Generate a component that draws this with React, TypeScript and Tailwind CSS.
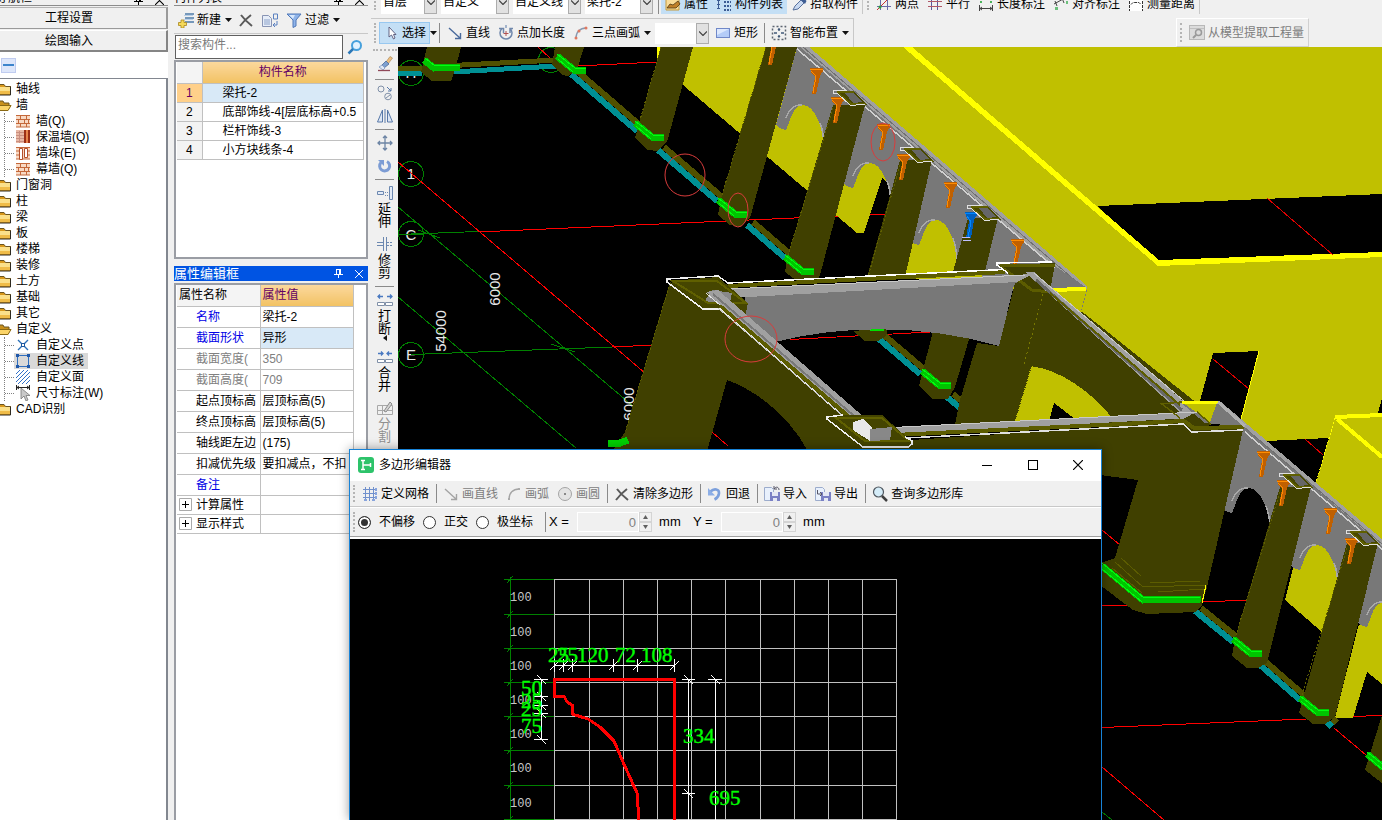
import React from "react";

const FONT = "font-['Liberation_Sans','Noto_Sans_CJK_SC',sans-serif]";

/* ---------- small icons, all on a 16 x 16 grid ---------- */

function Svg({ children, className = "" }: { children: React.ReactNode; className?: string }) {
  return (
    <svg viewBox="0 0 16 16" width="16" height="16" fill="none" className={"shrink-0 " + className} aria-hidden="true">
      {children}
    </svg>
  );
}

const Icons = {
  folder: (
    <Svg>
      <path d="M0 3.500h8l1.500 2H15V14H0z" fill="#d8981c" />
      <path d="M0 3.500h8l1.500 2H15" stroke="#6b5520" />
      <path d="M0 6h14v4H0z" fill="#fbe08a" />
      <path d="M0 10h14v3H0z" fill="#f0bc48" />
      <path d="M0 14h14.500V6" stroke="#2e2a20" />
    </Svg>
  ),
  folderOpen: (
    <Svg>
      <path d="M0 4h7l1 2h5v7H0z" fill="#c8901c" />
      <path d="M0 4h7l1 2h5v2" stroke="#6b5520" />
      <path d="M2 8h13.500l-3.500 6H0z" fill="#fbd468" />
      <path d="M2 8.500h13l-3 5H0" stroke="#8a6914" />
    </Svg>
  ),
  brick: (
    <Svg>
      <path d="M1 2h14v12H1z" fill="#f8d9c4" />
      <path d="M1 2.500h14M1 6.500h14M1 10.500h14M1 14h14M5.500 2v4M11.500 2v4M3.500 7v3M9.500 7v3M13.500 7v3M5.500 11v3M11.500 11v3" stroke="#c4683a" />
    </Svg>
  ),
  insul: (
    <Svg>
      <path d="M1 1h14v13H1z" fill="#e9b8a4" />
      <path d="M1 3.500h8M1 6.500h8M1 9.500h8M1 12.500h8M4.500 2v12" stroke="#c98f80" />
      <path d="M9 1h2v13H9zM13 1h2v13h-2z" fill="#9c2f16" />
      <path d="M11 1h2v13h-2z" fill="#e8844c" />
    </Svg>
  ),
  pier: (
    <Svg>
      <path d="M1 2h14v12H1z" fill="#f8d9c4" />
      <path d="M1 2.500h14M1 6h3M1 10h3M12 6h3M12 10h3M1 14h14" stroke="#c4683a" />
      <path d="M4.500 3.500h3v11h-3zM9.500 3.500h3v9h-3z" fill="#fff" stroke="#b4502a" />
    </Svg>
  ),
  point: (
    <Svg>
      <path d="M3 3l10 10M13 3L3 13" stroke="#2a70b8" strokeWidth="1.400" />
      <rect x="6.500" y="6.500" width="3" height="3" fill="#fff" stroke="#1c58a0" />
    </Svg>
  ),
  frame: (
    <Svg>
      <path d="M2.500 2.500h11v11h-11z" stroke="#2f6fc0" />
      <path d="M1 1h3v3H1zM12 1h3v3h-3zM1 12h3v3H1zM12 12h3v3h-3z" fill="#2058a8" />
    </Svg>
  ),
  hatch: (
    <Svg>
      <path d="M1 5l4-4M1 9l8-8M1 13l12-12M3 15L15 3M7 15l8-8M11 15l4-4" stroke="#3070c8" />
    </Svg>
  ),
  dimCursor: (
    <Svg>
      <path d="M1.500 0v5M14.500 0v5M2 2.500h12M4 1L2 2.500 4 4M12 1l2 1.500L12 4" stroke="#222" />
      <path d="M6 3v11l3-3 2 5 2-1-2-4.500h4z" fill="#c9c9c9" stroke="#777" strokeWidth=".8" />
    </Svg>
  ),
  create: (
    <Svg>
      <path d="M7 2h9M7 6h9M7 10h9" stroke="#4d7ba8" strokeWidth="1.500" />
      <path d="M6 3.500h9M6 7.500h9" stroke="#b8d0e8" />
      <path d="M3 8h3v2.500h2.500v3H6V16H3v-2.500H.5v-3H3z" fill="#f5d95a" stroke="#a8861c" strokeWidth=".8" />
    </Svg>
  ),
  cross: (
    <Svg>
      <path d="M3 3c3 4 6 7 11 11M13 3C9 6 5 10 2 14" stroke="#5a5a5a" strokeWidth="2" />
    </Svg>
  ),
  copyPage: (
    <Svg>
      <path d="M.5 3.500h6l3 3v8h-9z" fill="#e6edf8" stroke="#8894b4" />
      <path d="M2 8h6M2 10h6M2 12h6" stroke="#8aa0c8" />
      <path d="M11.500 2v5h4V2zM15 9v4h-4m2-2l-2 2 2 2" stroke="#5a80c0" />
    </Svg>
  ),
  filter: (
    <Svg>
      <path d="M1 2h14l-5 6v6l-3 1.500V8z" fill="#8fb4ea" stroke="#5078b8" />
      <path d="M3 3h6L7 7z" fill="#d8e8fc" />
    </Svg>
  ),
  search: (
    <Svg>
      <circle cx="9.500" cy="6.500" r="4.500" fill="#e2f2ff" stroke="#46a0dc" strokeWidth="2" />
      <path d="M6 10l-4.500 4.500" stroke="#2c78b8" strokeWidth="2.500" />
    </Svg>
  ),
  cursor: (
    <Svg>
      <path d="M6 2v10l2.500-2 2 4 1.500-1-1.500-3.500H13z" fill="#fff" stroke="#557" strokeWidth=".9" />
    </Svg>
  ),
  line: (
    <Svg>
      <path d="M2 3l11 10M13.500 8v5.500H8" stroke="#4a6a9c" strokeWidth="1.400" />
    </Svg>
  ),
  lineGray: (
    <Svg>
      <path d="M2 3l11 10M13.500 8v5.500H8" stroke="#a4a4a4" strokeWidth="1.400" />
    </Svg>
  ),
  pointLen: (
    <Svg>
      <path d="M4 3.500a6 6 0 1 0 8 0M1 3.500h4.500V8M12 8V3.500h3" stroke="#7088ac" strokeWidth="1.500" />
      <path d="M8 6v5M5.500 8.500h5" stroke="#b05050" />
      <path d="M8 0v3" stroke="#5878a8" />
    </Svg>
  ),
  arc3: (
    <Svg>
      <path d="M3 13C3 7 7 3 13 3" stroke="#8899b0" strokeWidth="1.300" />
      <circle cx="3" cy="13" r="1.500" fill="#e07860" />
      <circle cx="6" cy="6" r="1.500" fill="#e07860" />
      <circle cx="13" cy="3" r="1.500" fill="#e07860" />
    </Svg>
  ),
  arcGray: (
    <Svg>
      <path d="M3 13C3 7 7 3 13 3" stroke="#a4a4a4" strokeWidth="1.300" />
      <path d="M2 12h2v2H2zM12 2h2v2h-2z" fill="#aaa" />
    </Svg>
  ),
  circleGray: (
    <Svg>
      <circle cx="8" cy="8" r="6.500" fill="#e4e4e4" stroke="#a4a4a4" />
      <path d="M7 7h2v2H7z" fill="#888" />
    </Svg>
  ),
  rect: (
    <Svg>
      <rect x="1.500" y="3.500" width="13" height="9" fill="#b4ccf8" stroke="#7088c8" />
      <path d="M2 4h12L2 10z" fill="#dce8fe" />
    </Svg>
  ),
  smart: (
    <Svg>
      <rect x="1.500" y="1.500" width="13" height="13" stroke="#5c6470" strokeDasharray="2 2" strokeWidth="1.500" />
      <path d="M8 3v3M8 10v3M3 8h3M10 8h3M7 5l1-1 1 1M7 11l1 1 1-1" stroke="#405878" strokeWidth="1.300" />
    </Svg>
  ),
  extract: (
    <Svg>
      <rect x=".5" y=".5" width="15" height="14" fill="#dcdcdc" stroke="#b8b8b8" />
      <path d="M1 3.500h14" stroke="#c0c0c0" />
      <circle cx="9.500" cy="7.500" r="3" stroke="#9a9a9a" strokeWidth="1.500" />
      <path d="M7 10l-3 3" stroke="#9a9a9a" strokeWidth="2" />
    </Svg>
  ),
  property: (
    <Svg>
      <path d="M1 2h13v12H1z" fill="#f8dc98" stroke="#c49a3c" />
      <path d="M2 12l3-4 3 1 5-4 2 3-4 4H5z" fill="#c08028" stroke="#503810" strokeWidth=".8" />
    </Svg>
  ),
  list: (
    <Svg>
      <path d="M2.500 1v12M1 4.500h3M1 8.500h3M1 12.500h3" stroke="#3c5c94" />
      <path d="M8 2h7M8 6h7M8 10h7M8 14h7" stroke="#3c5c94" strokeWidth="2" strokeDasharray="2 1" />
    </Svg>
  ),
  picker: (
    <Svg>
      <path d="M2 14l2-4 6-6 3 3-6 6z" fill="#c8d8f0" stroke="#58709c" />
      <path d="M9 3l5 5 1.500-3-3-3.500z" fill="#3c5c94" />
    </Svg>
  ),
  twoPoint: (
    <Svg>
      <path d="M1 10.500h14M11.500 2v12M4.500 2v12" stroke="#6a6aa8" />
      <path d="M1 14L12 3" stroke="#c83030" />
      <circle cx="4" cy="11" r="1.500" fill="#2c9c3c" />
    </Svg>
  ),
  parallel: (
    <Svg>
      <path d="M4.500 2v12M10.500 2v12" stroke="#5858a0" />
      <path d="M1 5.500h14M1 10.500h14" stroke="#b05868" />
    </Svg>
  ),
  lengthDim: (
    <Svg>
      <path d="M2 5h2v2H2zM12 5h2v2h-2z" fill="#4cb45c" />
      <path d="M1.500 9v6M14.500 9v6M2 12.500h12M4 11l-2 1.500L4 14M12 11l2 1.500-2 1.500" stroke="#444" />
    </Svg>
  ),
  alignDim: (
    <Svg>
      <path d="M2 11h3v3H2zM13 5h2v3h-2z" fill="#6cc07c" />
      <path d="M1 8l11-6M2 5l2 5M9 2l2 5" stroke="#444" />
    </Svg>
  ),
  measure: (
    <Svg>
      <path d="M1 4h14v11H1z" fill="#fff" />
      <path d="M1.500 5v10M14.500 5v10M3 8.500l2-2h6l2 2" stroke="#333" strokeDasharray="3 1" />
    </Svg>
  ),
  eraser: (
    <Svg>
      <path d="M9 6l4-5.500L15.500 2 11 8z" fill="#f0c080" stroke="#a08050" strokeWidth=".6" />
      <path d="M5 9l4-4 3 3-5 4z" fill="#7ea0d0" stroke="#4a6898" strokeWidth=".8" />
      <path d="M2 11l3-2 3 3-2 2z" fill="#e0e8f4" stroke="#8098c0" strokeWidth=".8" />
      <path d="M1 14.500h12" stroke="#904858" strokeWidth="1.300" />
    </Svg>
  ),
  copyObj: (
    <Svg>
      <circle cx="4" cy="4" r="3" stroke="#8090a8" />
      <circle cx="11" cy="11.500" r="3.300" stroke="#8090a8" />
      <path d="M9 13l4-3" stroke="#8090a8" />
      <path d="M10 2l4 4m0-3v3h-3" stroke="#5878a8" />
    </Svg>
  ),
  mirror: (
    <Svg>
      <path d="M5.500 2v12h-5zM10.500 2v12h5z" stroke="#5878a8" fill="#dce6f4" />
      <path d="M8 1v14" stroke="#5878a8" />
    </Svg>
  ),
  move: (
    <Svg>
      <path d="M8 1v14M1 8h14M6 3l2-2 2 2M6 13l2 2 2-2M3 6L1 8l2 2M13 6l2 2-2 2" stroke="#6c84a4" strokeWidth="1.300" />
    </Svg>
  ),
  rotate: (
    <Svg>
      <path d="M10 3.500A5 5 0 1 1 4 4.500" stroke="#7c9cd4" strokeWidth="3" />
      <path d="M1 2h6v6z" fill="#7c9cd4" />
    </Svg>
  ),
  extend: (
    <Svg>
      <path d="M12.500 1.500h3v13h-3zM.5 6.500h6v3h-6z" stroke="#6c88b0" fill="#e2eaf6" />
      <path d="M8 7.500h4M8 10.500h4" stroke="#6c88b0" strokeDasharray="1 1" />
    </Svg>
  ),
  trim: (
    <Svg>
      <path d="M6.500 1v14M9.500 1v14M0 6.500h6M0 9.500h6" stroke="#6c88b0" />
      <path d="M10 6.500h6M10 9.500h6" stroke="#6c88b0" strokeDasharray="2 1" />
    </Svg>
  ),
  breakObj: (
    <Svg>
      <path d="M1 4.500h5M3 2.500l-2 2 2 2M10 4.500h5M13 2.500l2 2-2 2" stroke="#4878c0" strokeWidth="1.300" />
      <path d="M.5 10.500h7v3h-7zM8.500 10.500h7v3h-7z" stroke="#8090a8" fill="#fff" />
    </Svg>
  ),
  merge: (
    <Svg>
      <path d="M1 4.500h5M4 2.500l2 2-2 2M10 4.500h5M12 2.500l-2 2 2 2" stroke="#4878c0" strokeWidth="1.300" />
      <path d="M.5 10.500h7v3h-7zM8.500 10.500h7v3h-7z" stroke="#8090a8" fill="#fff" />
    </Svg>
  ),
  split: (
    <Svg>
      <path d="M.5 5.500h15v9H.5zM5.500 6v9M1 10.500h14" stroke="#a8a8a8" />
      <path d="M7 11l6-9 2 2-6 8z" fill="#d4d4d4" stroke="#8c8c8c" />
    </Svg>
  ),
  grid: (
    <Svg>
      <path d="M3.500 1v14M7.500 1v14M11.500 1v14M1 3.500h14M1 7.500h14M1 11.500h14" stroke="#7090cc" />
      <path d="M13 2h2v3h-2zM13 6h2v3h-2zM13 10h2v3h-2zM2 13h3v2H2zM10 13h3v2h-3z" fill="#88a4dc" />
    </Svg>
  ),
  undo: (
    <Svg>
      <path d="M3.500 5.500C7 2 12.500 3 12 7.500c-.4 3-2.500 5-4.500 6" stroke="#7ca0dc" strokeWidth="2.600" />
      <path d="M1 2v7.500h7z" fill="#8caee6" />
    </Svg>
  ),
  importFile: (
    <Svg>
      <path d="M.5 1.500h7l2 2v11h-9z" fill="#e8f0fc" stroke="#9caccc" />
      <path d="M6 6h10v9H6z" fill="#7a80c4" />
      <path d="M8 6h6v4H8zM9 12h4v3H9z" fill="#e4e8f4" />
      <path d="M10 3c2-3 5-2 5 1M10 0v3h3" stroke="#556" />
    </Svg>
  ),
  exportFile: (
    <Svg>
      <path d="M.5 1.500h7l2 2v11h-9z" fill="#e8f0fc" stroke="#9caccc" />
      <path d="M6 6h10v9H6z" fill="#7a80c4" />
      <path d="M8 6h6v4H8zM9 12h4v3H9z" fill="#e4e8f4" />
      <path d="M2.500 4v4h4M5 6l2 2-2 2" stroke="#556" />
    </Svg>
  ),
  magnifier: (
    <Svg>
      <circle cx="6.500" cy="6" r="5" fill="#d4ecf8" stroke="#505860" strokeWidth="1.200" />
      <path d="M10 10l5 5" stroke="#404040" strokeWidth="2.500" />
    </Svg>
  ),
};

function Caret({ className = "" }: { className?: string }) {
  return (
    <svg viewBox="0 0 7 4" width="7" height="4" className={"shrink-0 " + className} aria-hidden="true">
      <path d="M0 0h7L3.500 4z" fill="#111" />
    </svg>
  );
}

function Pin() {
  return (
    <svg viewBox="0 0 9 9" width="9" height="9" fill="none" stroke="currentColor" aria-hidden="true">
      <path d="M2.500 0v5M6.500 0v5M2 .5h5M5.500 0v5M0 5.500h9M4.500 6v3" />
    </svg>
  );
}

function Close({ size = 9 }: { size?: number }) {
  return (
    <svg viewBox="0 0 10 10" width={size} height={size} fill="none" stroke="currentColor" aria-hidden="true">
      <path d="M0 0l10 10M10 0L0 10" strokeWidth="1.200" />
    </svg>
  );
}

/* ---------- toolbar parts ---------- */

function Grip() {
  return <span className="mx-[3px] my-1 w-[2px] shrink-0 self-stretch border-l-2 border-dotted border-[#b4b4b4]" />;
}

function Sep({ className = "" }: { className?: string }) {
  return <span className={"w-px shrink-0 bg-[#8a8a8a] " + className} />;
}

type ToolProps = { icon: React.ReactNode; label: string; caret?: boolean; disabled?: boolean; className?: string };

function Tool({ icon, label, caret, disabled, className = "" }: ToolProps) {
  return (
    <button
      type="button"
      disabled={disabled}
      className={"flex shrink-0 items-center gap-[3px] px-1 whitespace-nowrap text-black disabled:text-[#7d7d7d] " + className}
    >
      {icon}
      {label}
      {caret && <Caret className="ml-[1px]" />}
    </button>
  );
}

function Combo({ label, value, className }: { label: string; value: string; className: string }) {
  return (
    <span className={"relative flex shrink-0 bg-white " + className}>
      <select aria-label={label} className="h-full w-full appearance-none bg-transparent pr-3 pl-[2px] outline-none">
        <option>{value}</option>
      </select>
      <span className="pointer-events-none absolute inset-y-0 right-0 flex w-[13px] items-center justify-center border border-[#adadad] bg-[#e1e1e1]">
        <svg viewBox="0 0 8 5" width="8" height="5" fill="none" aria-hidden="true">
          <path d="M0 .5l4 4 4-4" stroke="#404040" strokeWidth="1.200" />
        </svg>
      </span>
    </span>
  );
}

function TopToolbars() {
  return (
    <header className="h-[47px] shrink-0 text-xs">
      <div className="flex h-[18px] items-end overflow-hidden pb-1">
        <div className="flex h-6 shrink-0 items-end border-r border-[#c8c8c8]">
          <Grip />
          <div className="flex h-6 gap-1 pl-[2px]">
            <Combo label="楼层" value="首层" className="w-14" />
            <Combo label="构件类型" value="自定义" className="w-[68px]" />
            <Combo label="构件子类" value="自定义线" className="w-[68px]" />
            <Combo label="构件" value="梁托-2" className="w-[68px]" />
          </div>
          <Sep className="mr-[2px] ml-[5px] h-6" />
          <Tool icon={Icons.property} label="属性" className="h-5 bg-[#c4dff5]" />
          <Tool icon={Icons.list} label="构件列表" className="h-5 bg-[#c4dff5]" />
          <Tool icon={Icons.picker} label="拾取构件" className="h-5" />
        </div>
        <div className="flex h-6 shrink-0 items-end border-r border-[#c8c8c8] pl-px">
          <Grip />
          <Tool icon={Icons.twoPoint} label="两点" className="h-5" />
          <Tool icon={Icons.parallel} label="平行" className="h-5" />
          <Tool icon={Icons.lengthDim} label="长度标注" className="h-5" />
          <Tool icon={Icons.alignDim} label="对齐标注" className="h-5" />
          <Tool icon={Icons.measure} label="测量距离" className="h-5" />
        </div>
      </div>
      <div className="flex h-[29px] pr-[73px]">
        <div className="flex items-center border-t border-r border-[#c8c8c8]">
          <Grip />
          <button type="button" className="flex h-[22px] items-center gap-[3px] border border-[#98c8f0] bg-[#c4dff5] px-[3px] whitespace-nowrap">
            {Icons.cursor}选择
          </button>
          <Caret />
          <Sep className="mr-[3px] ml-[2px] h-5" />
          <Tool icon={Icons.line} label="直线" />
          <Tool icon={Icons.pointLen} label="点加长度" />
          <Tool icon={Icons.arc3} label="三点画弧" caret />
          <Combo label="半径" value="" className="h-[21px] w-[54px]" />
          <Tool icon={Icons.rect} label="矩形" className="ml-[2px]" />
          <Sep className="mx-[2px] h-5" />
          <Tool icon={Icons.smart} label="智能布置" caret />
        </div>
        <div className="ml-auto flex items-center border border-[#d0d0d0] border-t-white border-l-white">
          <Grip />
          <Tool icon={Icons.extract} label="从模型提取工程量" disabled />
        </div>
      </div>
    </header>
  );
}

const sideTools: ({ icon: React.ReactNode; text?: string; name: string; h: string; caret?: boolean; off?: boolean } | null)[] = [
  { icon: Icons.eraser, name: "删除", h: "h-6" },
  null,
  { icon: Icons.copyObj, name: "复制", h: "h-[23px]" },
  { icon: Icons.mirror, name: "镜像", h: "h-[22px]" },
  null,
  { icon: Icons.move, name: "移动", h: "h-[23px]" },
  { icon: Icons.rotate, name: "旋转", h: "h-[22px]" },
  null,
  { icon: Icons.extend, name: "延伸", text: "延伸", h: "h-[51px]" },
  { icon: Icons.trim, name: "修剪", text: "修剪", h: "h-[51px]" },
  null,
  { icon: Icons.breakObj, name: "打断", text: "打断", h: "h-[57px]", caret: true },
  { icon: Icons.merge, name: "合并", text: "合并", h: "h-[51px]" },
  { icon: Icons.split, name: "分割", text: "分割", h: "h-[51px]", off: true },
];

function SideToolbar() {
  return (
    <div className="flex w-[27px] shrink-0 flex-col items-center text-[13px] leading-[13px]">
      <span className="my-[2px] h-[2px] w-6 shrink-0 border-t-2 border-dotted border-[#b4b4b4]" />
      {sideTools.map((t, i) =>
        t === null ? (
          <span key={i} className="my-[2px] h-px w-[19px] shrink-0 bg-[#8a8a8a]" />
        ) : (
          <button
            key={i}
            type="button"
            aria-label={t.name}
            disabled={t.off}
            className={"flex w-5 shrink-0 flex-col items-center pt-[3px] disabled:text-[#909090] " + t.h}
          >
            {t.icon}
            {t.text && <span className="w-[13px] pt-px break-all">{t.text}</span>}
            {t.caret && (
              <svg viewBox="0 0 4 6" width="4" height="6" className="shrink-0" aria-hidden="true">
                <path d="M4 0v6L0 3z" fill="#111" />
              </svg>
            )}
          </button>
        ),
      )}
    </div>
  );
}

/* ---------- navigation tree ---------- */

type Node = { label: string; children?: { label: string; icon: React.ReactNode; selected?: boolean }[] };

const tree: Node[] = [
  { label: "轴线" },
  {
    label: "墙",
    children: [
      { label: "墙(Q)", icon: Icons.brick },
      { label: "保温墙(Q)", icon: Icons.insul },
      { label: "墙垛(E)", icon: Icons.pier },
      { label: "幕墙(Q)", icon: Icons.brick },
    ],
  },
  { label: "门窗洞" },
  { label: "柱" },
  { label: "梁" },
  { label: "板" },
  { label: "楼梯" },
  { label: "装修" },
  { label: "土方" },
  { label: "基础" },
  { label: "其它" },
  {
    label: "自定义",
    children: [
      { label: "自定义点", icon: Icons.point },
      { label: "自定义线", icon: Icons.frame, selected: true },
      { label: "自定义面", icon: Icons.hatch },
      { label: "尺寸标注(W)", icon: Icons.dimCursor },
    ],
  },
  { label: "CAD识别" },
];

function NavPanel() {
  return (
    <aside className="flex w-[168px] shrink-0 flex-col">
      <PanelTop title="导航栏" className="-ml-1" />
      <div className="flex flex-col gap-px pt-px">
        <button type="button" className="h-[22px] border-t border-r-2 border-b border-[#9a9a9a] border-t-[#b4b4b4] pr-7 text-xs">
          工程设置
        </button>
        <button type="button" className="h-[22px] border-t border-r-2 border-b-2 border-[#858585] border-t-white pr-7 text-xs">
          绘图输入
        </button>
      </div>
      <div className="flex h-[26px] items-center bg-white pl-px">
        <button type="button" aria-label="折叠" className="flex h-[15px] w-[15px] items-center border border-[#c0ccf0] bg-[#dde6fa] px-px">
          <span className="h-[2px] w-full bg-[#3c84cc]" />
        </button>
      </div>
      <ul className="flex-1 border-t border-r-2 border-[#828790] bg-white pt-[2px] text-xs leading-4">
        {tree.map((n) => (
          <li key={n.label}>
            <button type="button" className="flex h-4 items-center overflow-hidden">
              <span className="-ml-1 mr-1 flex">{n.children ? Icons.folderOpen : Icons.folder}</span>
              {n.label}
            </button>
            {n.children && (
              <ul className="ml-1 border-l border-dotted border-[#808080]">
                {n.children.map((c) => (
                  <li key={c.label} className="flex h-4 items-center">
                    <span className="w-[9px] border-t border-dotted border-[#808080]" />
                    <button type="button" className={"flex h-4 items-center gap-[5px] pr-1 " + (c.selected ? "bg-[#d9d9d9]" : "")}>
                      <span className="ml-px flex">{c.icon}</span>
                      {c.label}
                    </button>
                  </li>
                ))}
              </ul>
            )}
          </li>
        ))}
      </ul>
    </aside>
  );
}

function PanelTop({ title, className = "" }: { title: string; className?: string }) {
  return (
    <div className="flex h-[6px] shrink-0 items-end overflow-hidden border-b border-[#8c8c8c] text-xs leading-[14px]">
      <span className={className}>{title}</span>
      <span className="ml-auto flex items-end gap-3 pr-1">
        <Pin />
        <Close />
      </span>
    </div>
  );
}

/* ---------- component list and property panel ---------- */

const components = ["梁托-2", "底部饰线-4[层底标高+0.5", "栏杆饰线-3", "小方块线条-4"];

const props: { name: string; value: string; tone: string; on?: boolean }[] = [
  { name: "名称", value: "梁托-2", tone: "text-[#0000e6]" },
  { name: "截面形状", value: "异形", tone: "text-[#0000e6]", on: true },
  { name: "截面宽度(", value: "350", tone: "text-[#808080]" },
  { name: "截面高度(", value: "709", tone: "text-[#808080]" },
  { name: "起点顶标高", value: "层顶标高(5)", tone: "text-black" },
  { name: "终点顶标高", value: "层顶标高(5)", tone: "text-black" },
  { name: "轴线距左边", value: "(175)", tone: "text-black" },
  { name: "扣减优先级", value: "要扣减点，不扣", tone: "text-black" },
  { name: "备注", value: "", tone: "text-[#0000e6]" },
];

function MiddlePanel() {
  return (
    <section className="ml-[6px] flex w-[194px] shrink-0 flex-col text-xs">
      <PanelTop title="构件列表" />
      <div className="flex h-[27px] shrink-0 items-center">
        <Tool icon={Icons.create} label="新建" caret className="pr-[2px]" />
        <button type="button" aria-label="删除" className="ml-1">{Icons.cross}</button>
        <button type="button" aria-label="复制" className="ml-2">{Icons.copyPage}</button>
        <Tool icon={Icons.filter} label="过滤" caret className="ml-1" />
      </div>
      <div className="flex h-[27px] shrink-0 items-center border-t border-[#c8c8c8] pl-px">
        <input aria-label="搜索构件" placeholder="搜索构件..." className="h-6 w-[168px] border border-[#606060] bg-white px-[2px] pb-1 outline-none placeholder:text-[#7a7a7a]" />
        <button type="button" aria-label="搜索" className="ml-1">{Icons.search}</button>
      </div>
      <div className="h-[199px] shrink-0 border-2 border-[#9a9da4] bg-white pl-px">
        <table className="w-[187px] table-fixed border-collapse">
          <thead>
            <tr className="h-[21px]">
              <th className="w-[25px] border-r border-b border-[#c0c0c0] bg-[#f4f4f4]" />
              <th className="border-r border-b border-[#c0c0c0] bg-linear-to-b from-[#fbd89c] to-[#f2c262] p-0 font-normal text-[#640064]">构件名称</th>
            </tr>
          </thead>
          <tbody>
            {components.map((c, i) => (
              <tr key={c} className="h-[19px]">
                <td className={"border-r border-b border-[#c0c0c0] p-0 text-center leading-4 " + (i === 0 ? "bg-[#ffd08a] text-[#640064]" : "bg-[#f3f3f3]")}>{i + 1}</td>
                <td className={"overflow-hidden border-r border-b border-[#c0c0c0] p-0 pl-5 leading-4 whitespace-nowrap " + (i === 0 ? "bg-[#d8e9f7]" : "")}>{c}</td>
              </tr>
            ))}
          </tbody>
        </table>
      </div>
      <div className="mt-[7px] flex h-[15px] shrink-0 items-center bg-[#0054e3] pr-[5px] text-[13px] leading-[15px] text-white">
        <h2>属性编辑框</h2>
        <button type="button" aria-label="固定" className="ml-auto"><Pin /></button>
        <button type="button" aria-label="关闭" className="ml-3"><Close size={8} /></button>
      </div>
      <div className="mt-[2px] flex-1 border-t-2 border-r-2 border-l-2 border-[#9a9da4] bg-white pl-px">
        <table className="w-[177px] table-fixed border-collapse">
          <thead>
            <tr className="h-[21px] text-left">
              <th className="w-[83px] border-r border-b border-[#c0c0c0] bg-[#f4f4f4] p-0 pl-[2px] font-normal">属性名称</th>
              <th className="border-r border-b border-[#c0c0c0] bg-linear-to-b from-[#fbd89c] to-[#f2c262] p-0 pl-[2px] font-normal text-[#640064]">属性值</th>
            </tr>
          </thead>
          <tbody>
            {props.map((p) => (
              <tr key={p.name} className="h-[21px]">
                <td className={"overflow-hidden border-r border-b border-[#c0c0c0] p-0 pl-[19px] leading-4 whitespace-nowrap " + p.tone}>{p.name}</td>
                <td className={"overflow-hidden border-r border-b border-[#c0c0c0] p-0 pl-[2px] leading-4 whitespace-nowrap " + (p.on ? "bg-[#d8e9f7] " : "") + (p.tone === "text-[#808080]" ? "text-[#808080]" : "")}>{p.value}</td>
              </tr>
            ))}
            {["计算属性", "显示样式"].map((g) => (
              <tr key={g} className="h-[19px]">
                <td className="border-r border-b border-[#c0c0c0] p-0 pl-[2px] leading-4">
                  <button type="button" className="flex items-center gap-1">
                    <svg viewBox="0 0 13 13" width="13" height="13" fill="#fff" stroke="#aaa" aria-hidden="true">
                      <path d="M.5 .5h12v12H.5z" />
                      <path d="M3 6.500h7M6.500 3v7" stroke="#000" />
                    </svg>
                    {g}
                  </button>
                </td>
                <td className="border-r border-b border-[#c0c0c0]" />
              </tr>
            ))}
          </tbody>
        </table>
      </div>
    </section>
  );
}

/* ---------- 3D view ---------- */

const bays = [[776, 125], [843, 183], [909, 240], [976, 297], [1222, 508], [1290, 565], [1357, 622]];
const brackets = [[766, 39], [810, 68], [831, 97], [877, 124], [897, 154], [944, 182], [1011, 239], [1257, 451], [1277, 480], [1324, 508], [1345, 538]];
const clamps = [[557, 55], [635, 122], [718, 199], [785, 256], [922, 370], [1233, 638], [1300, 697], [1367, 753]];
const rails = [[571, 74, 637, 131], [658, 150, 717, 201], [747, 225, 785, 258], [879, 339, 920, 374], [947, 397, 960, 408], [1195, 611, 1233, 642], [1260, 665, 1300, 700], [1327, 722, 1332, 727]];
const caps = [[833, 90], [900, 147], [967, 205], [1279, 473], [1346, 530]];

function Capital({ x, y }: { x: number; y: number }) {
  return (
    <g transform={`translate(${x} ${y})`}>
      <path d="M3 2h18l14 13-18 1z" fill="#484800" />
      <path d="M12 3h8l10 9-10 1z" fill="#666" />
      <path d="M4 2h17M5 3l13 11h15" stroke="#606000" strokeWidth="2" />
      <path d="M14 0H0v3l5 1 12 11h6l9-1" stroke="#e0e0e0" />
    </g>
  );
}

function Scene() {
  return (
    <svg viewBox="398 47 984 773" preserveAspectRatio="xMinYMin slice" fill="none" shapeRendering="crispEdges" className="block h-full w-full" role="img" aria-label="三维视图">
      <rect x="398" y="47" width="984" height="773" fill="#000" />

      {/* axis grid */}
      <g stroke="#008000">
        <path d="M398 207L640 412M398 297L576 448M398 234.500L478 231.500M412 354.500L612 347M551 344l24 8M418 230l22 8M1102 812l10 8" />
        <circle cx="411" cy="73" r="12.500" />
        <circle cx="411" cy="174" r="12.500" />
        <circle cx="411" cy="234" r="12.500" />
        <circle cx="411" cy="355" r="12.500" />
        <circle cx="551" cy="60" r="12.500" />
      </g>
      <g fill="#e8e8e8" fontFamily="Liberation Sans, sans-serif" fontSize="15" textAnchor="middle">
        <text x="411" y="78">H</text>
        <text x="411" y="179">1</text>
        <text x="411" y="240">C</text>
        <text x="411" y="360">E</text>
        <text transform="translate(500 289) rotate(-90)">6000</text>
        <text transform="translate(446 331) rotate(-90)">54000</text>
        <text transform="translate(634 404) rotate(-90)">6000</text>
      </g>
      <path d="M398 162L645 373M712 432l16 14M478 232L885 214M612 347l42-2M790 339.500L930 332M577 66l80-4M538 47l12 11M1102 606l25-1M1202 602l46-2M1102 727.500L1306 719M1350 717l32-2M1102 530l18 15M1102 767l62 53M1334 728l32 27" stroke="#f00" />
      <path d="M411 354.500H418M400 234.500h24" stroke="#008000" />

      {/* rear yellow volumes */}
      <path d="M657 47H1382V438L1328 438 1267 441 1240 425 1200 418 1050 292 985 290 905 277 915 200 900 195 882 178 864 233H857L683 85 657 62z" fill="#c0c000" />
      <path d="M1097 206L1382 194V253L1159 262zM1213 353l46-2-19 72-40-22zM1378 413l4-15v15z" fill="#000" />
      <path d="M903 47h9L1159 260 1382 252v5L1158 266zM657 47h5l-5 14z" fill="#ff0" />
      <path d="M1259 351l-19 72" stroke="#ff0" />
      <path d="M1267 198l66 57M1213 359l36 30" stroke="#e00000" />
      <path d="M1267 441l61-3-12 45z" fill="#000" />
      <path d="M1305 439l18 16" stroke="#e00000" />
      <path d="M1335 417l47-3V545L1316 483z" fill="#c0c000" />
      <path d="M1335 417l47-2M1337 419l45 38" stroke="#ff0" strokeWidth="4" />
      <path d="M1335 418l-19 65" stroke="#ff0" strokeDasharray="2 2" />
      <path d="M1300 540h35l10 35-23 57-37-32zM1358 627l24-27v84l-15-12-14 46h-18z" fill="#c0c000" />

      {/* arcade walls */}
      {bays.map(([x, y]) => (
        <g key={x} transform={`translate(${x} ${y})`}>
          <path d="M0 0L21 -78 90 -20 60 30 48 24C47 0 38 -20 27 -20C18 -20 15 -8 12 0L10 5 3 3z" fill="#787878" />
          <path d="M10 -7C13 -16 19 -21 26 -20M44 -2C47 6 48 14 48 22" stroke="#a8a8a8" strokeWidth="1.500" />
        </g>
      ))}
      <path d="M797 47h8L1085 288v4L797 52zM1217 402L1382 541v12L1243 434z" fill="#787878" />
      <path d="M800 47h9L1087 286v4h-6zM1216 402h5L1382 539v7z" fill="#a0a0a0" />
      <path d="M797 49L1080 289M1245 432L1382 549" stroke="#d0d0d0" strokeWidth="1.500" />
      <path d="M803 47l282 242M1219 406L1382 544" stroke="#707070" />

      {/* rails between the piers */}
      {rails.map(([a, b, c, d]) => (
        <g key={a}>
          <path d={`M${a + 6} ${b - 3}L${c + 5} ${d - 4}`} stroke="#505000" strokeWidth="6" />
          <path d={`M${a} ${b}L${c} ${d}`} stroke="#009094" strokeWidth="6" />
        </g>
      ))}
      <path d="M398 68.500H422M453 65.500L556 60" stroke="#505000" strokeWidth="5" />
      <path d="M398 73.500H422M453 72L556 66" stroke="#009094" strokeWidth="5" />

      {/* piers */}
      <g fill="#404000">
        <path d="M427 47h34l-6 23-4 11H432L421 72zM555 47h29l-7 23-9 6-6-1-10-10z" />
        <path d="M661 47h32L667 142l-10 9-9-1-13-12 5-18z" />
        <path d="M766 47h31L750 218l-10 9-10-2-12-10 4-20z" />
        <path d="M833 105h32L820 275l-2 6H797L785 272l3-17z" />
        <path d="M900 160h32L905 277H867z" />
        <path d="M968 218h30L984 275H952z" />
        <path d="M853 331l35-3-2 8-8 5H865z" />
        <path d="M933 331l37 5-15 51-7 12H933l-14-13z" />
        <path d="M1280 487h31L1267 663l-9 5h-11l-15-12 3-18zM1347 543h31L1335 717l-10 7h-12l-14-11zM1382 715l-17 55 17 13z" />
      </g>
      <path d="M661 47L640 120M766 47L722 195M833 108L788 255M900 165L868 277M1280 492l-45 146M1347 548l-46 150" stroke="#606000" strokeDasharray="2 2" />
      <path d="M870 330l14-1" stroke="#00e000" strokeWidth="3" />

      {clamps.map(([x, y]) => (
        <g key={x} transform={`translate(${x} ${y})`}>
          <path d="M0 1L17 15 29 15" stroke="#00c400" strokeWidth="7" />
          <path d="M0 -1L18 13 29 13M1 4L16 17" stroke="#00ff10" />
        </g>
      ))}
      <path d="M424 60l10 8 26-1" stroke="#00c400" strokeWidth="7" />
      <path d="M425 58l10 8 25-1" stroke="#00ff10" />

      {/* brackets */}
      {brackets.map(([x, y]) => (
        <g key={x} transform={`translate(${x} ${y})`}>
          <path d="M0 0h13v3l-3 5-4 18H2L5 9 1 4z" fill="#c06000" />
          <path d="M0 1h13M1 3l5 5-3 17" stroke="#ff8c00" />
        </g>
      ))}
      <path d="M965 212h12v3l-3 5-3 18h-5l3-17-3-5z" fill="#0060c0" />
      <path d="M965 213h12M967 216l4 6-3 15" stroke="#0088ff" />
      <path d="M962 237h8M963 240h8" stroke="#c0c0ff" />
      {caps.map(([x, y]) => (
        <Capital key={x} x={x} y={y} />
      ))}

      {/* right side frame */}
      <path d="M1015 283L1040 276 1055 290 1218 420 1200 430 955 424 960 400 977 343 999 346z" fill="#404000" />
      <path d="M1031 366C1060 370 1090 390 1114 420L1014 424z" fill="#c0c000" />
      <path d="M1031 366l-17 56" stroke="#404000" strokeWidth="2" strokeDasharray="1 1" />
      <path d="M1054 403l-5 18 26-2z" fill="#000" />
      <path d="M1055 266l32 22-37 2z" fill="#787878" />
      <path d="M1050 292l37-3-5 22-2 5z" fill="#c0c000" />
      <path d="M1048 290.500l38-2" stroke="#ff0" strokeWidth="4" />
      <path d="M1087 290l-6 20" stroke="#787878" strokeDasharray="2 2" />
      <path d="M997 265l58-2-5 29-20-2z" fill="#404000" />
      <path d="M1043 294l-19 70" stroke="#787800" strokeDasharray="2 3" />
      <path d="M1000 265h55M1000 266l32 24 18 2" stroke="#5c5c00" strokeWidth="3" />

      {/* rear beam */}
      <path d="M745 297L1015 281 999 346C930 326 850 323 775 342L745 318z" fill="#787878" />
      <path d="M708 290L1033 274l-16 8L730 298z" fill="#a0a0a0" />
      <path d="M708 290L1025 275" stroke="#c8c8c8" />
      <path d="M728 286L1005 272" stroke="#5c5c00" strokeWidth="4" />
      <path d="M728 283L1003 269.500M1008 273l-11-8v-2l55-1" stroke="#fff" strokeWidth="1.500" />
      <path d="M1025 272h9l163 141-14 2z" fill="#a0a0a0" />
      <path d="M1036 280l146 130" stroke="#686868" strokeWidth="3" />
      <path d="M1034 273l163 139" stroke="#c8c8c8" />
      <path d="M1050 293l130 112" stroke="#5c5c00" strokeWidth="2" />

      {/* left arch frame */}
      <path d="M670 282L720 300 800 370 885 440 880 455H810C790 415 755 390 727 380L706 455H610L625 432z" fill="#404000" />
      <path d="M670 283l-45 150" stroke="#606000" strokeDasharray="2 2" />
      <path d="M608 443h12l8-3" stroke="#00d000" strokeWidth="7" />
      <path d="M670 281l48-4 30 26-3 15-23-10H704z" fill="#464600" />
      <path d="M712 290l20 3-2 10-26-1z" fill="#888" />
      <path d="M673 281h44l29 22h-38z" stroke="#606000" strokeWidth="2" />
      <path d="M706 292l12-2 154 134-16 1z" fill="#a0a0a0" />
      <path d="M706 293l150 130" stroke="#e0e0e0" />
      <path d="M713 294l148 128" stroke="#787878" strokeWidth="2" />
      <path d="M720 306l128 110" stroke="#5c5c00" strokeWidth="4" />
      <path d="M728 283l-10-7-51 3v3l36 27h17l123 107" stroke="#f0f0f0" strokeWidth="1.500" />
      <path d="M718 308l125 108" stroke="#c8c8c8" />

      {/* front frame */}
      <path d="M863 447L912 440 1182 422 1243 430 1207 587 1202 605 1195 612 1147 614 1133 610 1100 585V563L1115 558 1138 480 1100 475H875z" fill="#404000" />
      <path d="M1180 402h38l27 25-40-4z" fill="#787878" />
      <path d="M1183 403h34l-7 19z" fill="#c0c000" />
      <path d="M1182 402.500h36" stroke="#ff0" strokeWidth="3" />
      <path d="M892 427L1197 411.500l-13 7L892 434z" fill="#a0a0a0" />
      <path d="M892 427.500L1197 412" stroke="#c8c8c8" />
      <path d="M895 435L1184 421l10 7 50-1" stroke="#5c5c00" strokeWidth="4" />
      <path d="M906 438L1183 424l9 8 51-2" stroke="#e0e0e0" strokeWidth="1.500" />
      <path d="M1182 402l-20 2 18 14M1197 412l14 12M1220 403l25 22" stroke="#606000" strokeWidth="1.500" />
      <path d="M1218 402l27 24" stroke="#b0b0b0" strokeWidth="3" />
      <path d="M828 417l14-2h40l30 27-49 5z" fill="#444400" />
      <path d="M836 418h46l27 23h-44z" stroke="#606000" strokeWidth="2" />
      <path d="M843 415l-16 2v2l36 28h45l4-3v-3l-7-4" stroke="#f0f0f0" strokeWidth="1.500" />
      <path d="M853 422l10-3 9 9-2 13-17-11z" fill="#e8e8e8" />
      <path d="M870 429l22-2-2 13-20 1z" fill="#888" />
      <path d="M1115 562l28 25 62-2M1112 568l30 25M1150 583l50-2M1158 592l46-3M1121 558l20 18" stroke="#5c5c00" />
      <path d="M1102 566l41 34 58-1" stroke="#00c400" strokeWidth="7" />
      <path d="M1102 563l42 35 57-1M1102 569l40 33" stroke="#00ff10" />
      <path d="M1206 585l-4 18" stroke="#ff0" />

      {/* review marks */}
      <g stroke="#d83c3c" shapeRendering="auto">
        <ellipse cx="685" cy="175" rx="20" ry="21" />
        <ellipse cx="738" cy="210" rx="10" ry="17" />
        <ellipse cx="883" cy="142" rx="12" ry="19" />
        <ellipse cx="751" cy="339" rx="26" ry="23" />
      </g>
    </svg>
  );
}

/* ---------- polygon editor ---------- */

const gx = [554, 589, 623, 657, 691, 725, 760, 794, 828, 862, 896];
const gy = [579, 614, 648, 682, 716, 750, 785, 819];

function PolygonCanvas() {
  return (
    <svg viewBox="350 539 751 281" preserveAspectRatio="xMinYMin slice" fill="none" shapeRendering="crispEdges" className="block min-h-0 w-full flex-1 bg-black" role="img" aria-label="多边形">
      <g stroke="#c0c0c0">
        {gx.map((x) => <path key={x} d={`M${x}.5 579V820`} />)}
        {gy.map((y) => <path key={y} d={`M554 ${y}.5H896`} />)}
      </g>
      <g stroke="#008000">
        <path d="M510.500 577V820" />
        {gy.map((y) => <path key={y} d={`M504 ${y}.5H554M507 ${y + 4}l6 -7`} />)}
      </g>
      <g fill="#c8c8c8" fontFamily="Liberation Mono, monospace" fontSize="12">
        {gy.slice(0, 7).map((y) => <text key={y} x="510" y={y + 22}>100</text>)}
      </g>
      <g stroke="#fff">
        <path d="M554 665.500H675M541.500 679V740M688.500 679V820M715.500 679V820" />
        {[554, 563, 572, 613, 637, 674].map((x) => <path key={x} d={`M${x}.5 659v13M${x - 4} 670l9 -9`} />)}
        {[679, 696, 705, 713, 739].map((y) => <path key={y} d={`M534 ${y}.5h14M537 ${y - 4}l9 9`} />)}
        {[679, 793].map((y) => <path key={y} d={`M682 ${y}.5h13M684 ${y - 4}l9 9`} />)}
        <path d="M708 679.500h14M711 675l9 9" />
      </g>
      <path d="M639 820L637 793 623 762 614 741 600 727 588 719 572 714V705L567 702 564 696H554.500V679.500H674.500V820" stroke="#f00" strokeWidth="3" />
      <g fill="#00ff00" stroke="#00ff00" strokeWidth=".4" fontFamily="Liberation Serif, serif" fontSize="21">
        <text x="548" y="662">25</text>
        <text x="557" y="662">25</text>
        <text x="577" y="662">120</text>
        <text x="615" y="662">72</text>
        <text x="641" y="662">108</text>
        <text x="521" y="695">50</text>
        <text x="521" y="708">25</text>
        <text x="521" y="716">25</text>
        <text x="521" y="733">75</text>
        <text x="683" y="743">334</text>
        <text x="709" y="805">695</text>
      </g>
    </svg>
  );
}

function Coord({ axis }: { axis: string }) {
  const id = "coord-" + axis;
  return (
    <div className="flex items-center">
      <label htmlFor={id} className="w-7 text-[13px]">{axis} =</label>
      <input id={id} disabled defaultValue="0" className="h-5 w-[62px] border border-white bg-[#f0f0f0] pr-[2px] text-right text-[13px] text-[#808080]" />
      <span className="flex w-[13px] flex-col">
        {["M0 4h5L2.500 0z", "M0 0h5L2.500 4z"].map((d, i) => (
          <button key={d} type="button" aria-label={axis + (i ? " 减" : " 加")} className="flex h-[10px] items-center justify-center border border-[#d4d4d4]">
            <svg viewBox="0 0 5 4" width="5" height="4" aria-hidden="true"><path d={d} fill="#606060" /></svg>
          </button>
        ))}
      </span>
      <span className="w-[35px] pl-[7px] text-[13px]">mm</span>
    </div>
  );
}

function PolygonEditor() {
  const sep = "mr-[2px] ml-[3px] h-[19px]";
  return (
    <section className="absolute top-[449px] bottom-0 left-[349px] flex w-[753px] flex-col border border-b-0 border-[#1883d7] bg-[#f0f0f0] text-xs shadow-[0_0_10px_rgba(0,0,0,0.4)]">
      <div className="flex h-[31px] shrink-0 items-center bg-white pb-px pl-2">
        <svg viewBox="0 0 16 16" width="16" height="16" fill="none" aria-hidden="true">
          <rect width="16" height="16" rx="3" fill="#2dc36a" />
          <path d="M3 3.500h4M3 12.500h4M5 3.500v9M5 8h8M12.500 6v4" stroke="#fff" strokeWidth="1.500" />
        </svg>
        <h2 className="pl-[5px]">多边形编辑器</h2>
        <div className="ml-auto flex self-stretch">
          <button type="button" aria-label="最小化" className="flex w-[46px] items-center justify-center"><span className="h-px w-[10px] bg-black" /></button>
          <button type="button" aria-label="最大化" className="flex w-[45px] items-center justify-center"><span className="h-[10px] w-[10px] border border-black" /></button>
          <button type="button" aria-label="关闭" className="flex w-[46px] items-center justify-center"><Close size={10} /></button>
        </div>
      </div>
      <div className="flex h-[26px] shrink-0 items-center border-b border-[#c8c8c8]">
        <Grip />
        <Tool icon={Icons.grid} label="定义网格" />
        <Sep className={sep} />
        <Tool icon={Icons.lineGray} label="画直线" disabled />
        <Tool icon={Icons.arcGray} label="画弧" disabled />
        <Tool icon={Icons.circleGray} label="画圆" disabled />
        <Sep className={sep} />
        <Tool icon={Icons.cross} label="清除多边形" />
        <Sep className={sep} />
        <Tool icon={Icons.undo} label="回退" />
        <Sep className={sep} />
        <Tool icon={Icons.importFile} label="导入" />
        <Tool icon={Icons.exportFile} label="导出" />
        <Sep className={sep} />
        <Tool icon={Icons.magnifier} label="查询多边形库" />
      </div>
      <div className="flex h-[30px] shrink-0 items-center border-t border-b border-t-white border-b-[#a0a0a0]">
        <Grip />
        <div className="flex gap-2">
          {["不偏移", "正交", "极坐标"].map((t, i) => (
            <label key={t} className="flex items-center gap-2">
              <input
                type="radio"
                name="offset"
                defaultChecked={i === 0}
                className="h-[13px] w-[13px] appearance-none rounded-full border border-[#333] bg-white checked:bg-[#333] checked:shadow-[inset_0_0_0_2px_#fff]"
              />
              {t}
            </label>
          ))}
        </div>
        <Sep className="mr-[3px] ml-3 h-5" />
        <Coord axis="X" />
        <span className="w-[6px]" />
        <Coord axis="Y" />
      </div>
      <div className="h-[2px] shrink-0 bg-white" />
      <PolygonCanvas />
    </section>
  );
}

export default function App() {
  return (
    <div className={"relative flex h-screen overflow-hidden bg-[#f0f0f0] text-black " + FONT}>
      <NavPanel />
      <MiddlePanel />
      <main className="ml-[3px] flex min-w-0 flex-1 flex-col">
        <TopToolbars />
        <div className="flex min-h-0 flex-1">
          <SideToolbar />
          <div className="min-w-0 flex-1 overflow-hidden bg-black">
            <Scene />
          </div>
        </div>
      </main>
      <PolygonEditor />
    </div>
  );
}
